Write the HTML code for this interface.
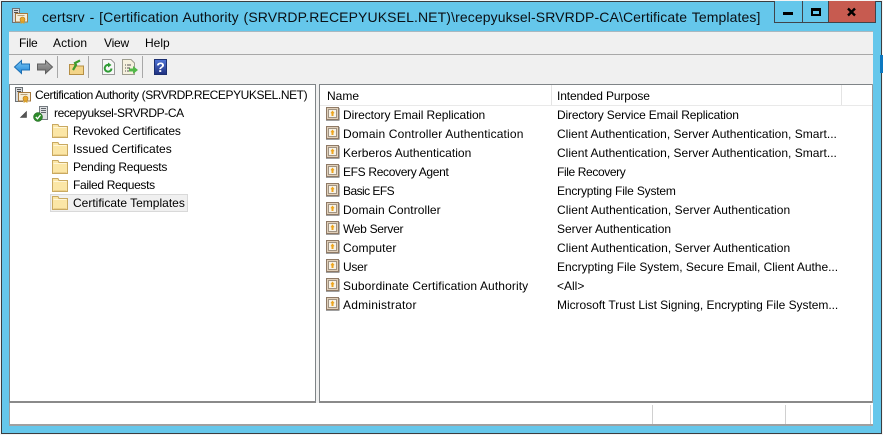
<!DOCTYPE html>
<html><head><meta charset="utf-8"><style>
html,body{margin:0;padding:0;width:883px;height:435px;overflow:hidden;background:#f4f4f4;font-family:"Liberation Sans",sans-serif;font-size:12px;color:#000}
div,span,svg{position:absolute;box-sizing:border-box}
.t{white-space:nowrap;line-height:16px;height:16px}
svg{overflow:visible}
</style></head><body>
<svg width="0" height="0" style="left:0;top:0"><defs>
<linearGradient id="bl" x1="0" y1="0" x2="0" y2="1"><stop offset="0" stop-color="#7cc8f4"/><stop offset="1" stop-color="#1f86d8"/></linearGradient>
<linearGradient id="gr" x1="0" y1="0" x2="0" y2="1"><stop offset="0" stop-color="#a8a8a8"/><stop offset="1" stop-color="#6c6c6c"/></linearGradient>
<linearGradient id="hp" x1="0" y1="0" x2="0" y2="1"><stop offset="0" stop-color="#4f74d6"/><stop offset="1" stop-color="#1f3180"/></linearGradient>
<symbol id="ca" viewBox="0 0 16 16"><rect x="0.500" y="0.500" width="7" height="14" fill="#d8dadc" stroke="#6d7276"/><rect x="2" y="2" width="4" height="1" fill="#555"/><rect x="2" y="4" width="4" height="1" fill="#555"/><rect x="3.500" y="5.500" width="12" height="8.500" fill="#f6efdc" stroke="#a5793f"/><rect x="5.500" y="7" width="7" height="1" fill="#b9a27a"/><circle cx="10.500" cy="11.500" r="2.500" fill="#e9a92c" stroke="#b5791c" stroke-width=".6"/><path d="M9 13l-.5 3 2-1 2 1-.5-3" fill="#d8a02a"/></symbol>
<symbol id="srv" viewBox="0 0 16 16"><rect x="6.500" y="0.500" width="8" height="13" fill="#dfe1e3" stroke="#747a80"/><rect x="8" y="2" width="5" height="1" fill="#60666c"/><rect x="8" y="4" width="5" height="1" fill="#60666c"/><rect x="8" y="6" width="5" height="1" fill="#60666c"/><circle cx="5" cy="11" r="4.500" fill="#2d8a2a" stroke="#1a5c1a" stroke-width=".5"/><path d="M2.800 11l1.700 1.800 3-3.800" fill="none" stroke="#fff" stroke-width="1.300"/></symbol>
<symbol id="fold" viewBox="0 0 16 16"><path d="M0.500 14.500V1.500h5.500l1 2h8.500v11z" fill="#fbe6a6" stroke="#c9a961"/><path d="M1.500 4.500h13" stroke="#fff6d8" fill="none"/><path d="M1.500 13.500h13" stroke="#ecd08a" fill="none"/></symbol>
<symbol id="cert" viewBox="0 0 16 16"><rect x="1.500" y="1.500" width="12" height="12" fill="#e0cfb9" stroke="#8f7a66"/><rect x="3.500" y="3.500" width="8" height="8" fill="#f8f3e8" stroke="#a09383"/><path d="M7.500 4.500l2 2.500-1 .5v2.500h-2V7.500l-1-.5z" fill="#eda51f"/><path d="M1 14.500h13.500" stroke="#a0a0a0" fill="none"/><path d="M14.500 2v12" stroke="#b4b4b4" fill="none"/></symbol>
</defs></svg>

<div style="left:1px;top:1px;width:881px;height:433px;background:#65c7eb;border:1px solid #3a3d40"></div>
<div style="left:880px;top:55px;width:3px;height:18px;background:#0c78c0"></div>

<svg style="left:12px;top:8px" width="16" height="16"><use href="#ca"/></svg>
<div class="t" style="left:42px;top:8px;font-size:14px;letter-spacing:.11px;word-spacing:.8px;height:18px;line-height:18px;color:#0a0f14">certsrv - [Certification Authority (SRVRDP.RECEPYUKSEL.NET)\recepyuksel-SRVRDP-CA\Certificate Templates]</div>

<div style="left:774px;top:1px;width:102px;height:22px;border:1px solid #40444a;border-top:0;background:#65c7eb"></div>
<div style="left:802px;top:1px;width:1px;height:22px;background:#40444a"></div>
<div style="left:828px;top:1px;width:1px;height:22px;background:#40444a"></div>
<div style="left:829px;top:1px;width:46px;height:21px;background:#c75b50"></div>
<div style="left:783px;top:12px;width:10px;height:3px;background:#000"></div>
<div style="left:811px;top:8px;width:10px;height:8px;border:2px solid #000;border-top-width:3px"></div>
<svg style="left:847px;top:8px" width="9" height="8"><path d="M1 0.500L8 7.500M8 0.500L1 7.500" stroke="#000" stroke-width="2.400"/></svg>

<div style="left:9px;top:31px;width:864px;height:53px;background:#f0f0f0;border-top:1px solid #a9b8c0"></div>
<div style="left:9px;top:84px;width:864px;height:320px;background:#f0f0f0"></div>
<div style="left:9px;top:54px;width:864px;height:1px;background:#a8a8a8"></div>
<div class="t" style="left:19px;top:35px;letter-spacing:-.2px">File</div>
<div class="t" style="left:53px;top:35px;letter-spacing:.15px">Action</div>
<div class="t" style="left:104px;top:35px;letter-spacing:-.2px">View</div>
<div class="t" style="left:145px;top:35px">Help</div>

<svg style="left:14px;top:60px" width="16" height="14"><path d="M0.500 7L7.500 0.500V4H15.500V10H7.500V13.500Z" fill="url(#bl)" stroke="#1c6fb4"/></svg>
<svg style="left:37px;top:60px" width="16" height="14"><path d="M15.500 7L8.500 0.500V4H0.500V10H8.500V13.500Z" fill="url(#gr)" stroke="#5f5f5f"/></svg>
<div style="left:57px;top:56px;width:1px;height:22px;background:#a8a8a8"></div>
<svg style="left:69px;top:59px" width="15" height="16"><path d="M0.500 15.500V5.500H5l1 1.500h8.500v8.500z" fill="#f3d488" stroke="#b58f45"/><path d="M4 11L7 6 6 4 11 1.500" fill="none" stroke="#3d9c2c" stroke-width="2.200"/></svg>
<div style="left:88px;top:56px;width:1px;height:22px;background:#a8a8a8"></div>
<svg style="left:101px;top:59px" width="15" height="16"><path d="M1.500 0.500H10L13.500 4V15.500H1.500Z" fill="#f7f7f7" stroke="#9a9a9a"/><path d="M10.500 9.500A3.400 3.400 0 1 1 8 6" fill="none" stroke="#2f9c35" stroke-width="2"/><path d="M7 3.500L10.500 6 7 8.500Z" fill="#2f9c35"/></svg>
<svg style="left:122px;top:59px" width="16" height="16"><path d="M0.500 0.500H9L12.500 4V15.500H0.500Z" fill="#f6f1de" stroke="#9d9d8f"/><path d="M3 6h1M5 6h4M3 9h1M5 9h3M3 12h1M5 12h3" stroke="#555" fill="none"/><path d="M7 9.500h4V7l5 4-5 4v-2.500H7z" fill="#52b848"/></svg>
<div style="left:142px;top:56px;width:1px;height:22px;background:#a8a8a8"></div>
<svg style="left:154px;top:59px" width="13" height="16"><rect x=".5" y=".5" width="12" height="15" fill="url(#hp)" stroke="#1c2f70"/></svg>
<div class="t" style="left:154px;top:59px;width:13px;text-align:center;color:#fff;font-weight:bold;font-size:14px">?</div>

<div style="left:9px;top:84px;width:307px;height:319px;background:#fff;border:1px solid #7f8487;border-bottom:2px solid #8a8a8a"></div>
<div style="left:319px;top:84px;width:554px;height:319px;background:#fff;border:1px solid #7f8487;border-bottom:2px solid #8a8a8a;border-right:0"></div>
<div style="left:872px;top:84px;width:1px;height:342px;background:#9a9a9a"></div>
<div style="left:9px;top:403px;width:864px;height:23px;background:#fff;border-left:1px solid #a0a0a0;border-bottom:2px solid #a0a0a0"></div>
<div style="left:652px;top:405px;width:1px;height:19px;background:#d0d0d0"></div>
<div style="left:785px;top:405px;width:1px;height:19px;background:#d0d0d0"></div>
<div style="left:870px;top:405px;width:1px;height:19px;background:#d0d0d0"></div>

<svg style="left:15px;top:87px" width="16" height="16"><use href="#ca"/></svg>
<div class="t" style="left:35px;top:87px;letter-spacing:-.42px">Certification Authority (SRVRDP.RECEPYUKSEL.NET)</div>
<svg style="left:20px;top:111px" width="7" height="7"><path d="M6.500 0.500V6.500H0.500Z" fill="#555" stroke="#444" stroke-width=".6"/></svg>
<svg style="left:33px;top:106px" width="16" height="16"><use href="#srv"/></svg>
<div class="t" style="left:54px;top:105px;letter-spacing:-.42px">recepyuksel-SRVRDP-CA</div>

<div style="left:50px;top:194px;width:138px;height:18px;background:#f0f0f0;border:1px solid #d9d9d9"></div>
<svg style="left:52px;top:123px" width="16" height="16"><use href="#fold"/></svg>
<svg style="left:52px;top:141px" width="16" height="16"><use href="#fold"/></svg>
<svg style="left:52px;top:159px" width="16" height="16"><use href="#fold"/></svg>
<svg style="left:52px;top:177px" width="16" height="16"><use href="#fold"/></svg>
<svg style="left:52px;top:195px" width="16" height="16"><use href="#fold"/></svg>
<div class="t" style="left:73px;top:123px;letter-spacing:-.15px">Revoked Certificates</div>
<div class="t" style="left:73px;top:141px">Issued Certificates</div>
<div class="t" style="left:73px;top:159px;letter-spacing:-.25px">Pending Requests</div>
<div class="t" style="left:73px;top:177px;letter-spacing:-.33px">Failed Requests</div>
<div class="t" style="left:73px;top:195px">Certificate Templates</div>

<div style="left:320px;top:85px;width:522px;height:20px;border-right:1px solid #e4e4e4"></div>
<div style="left:320px;top:105px;width:552px;height:1px;background:#e9e9e9"></div>
<div style="left:551px;top:85px;width:1px;height:20px;background:#e4e4e4"></div>
<div class="t" style="left:327px;top:88px">Name</div>
<div class="t" style="left:557px;top:88px;letter-spacing:-.12px">Intended Purpose</div>

<svg style="left:325px;top:106px" width="16" height="16"><use href="#cert"/></svg>
<div class="t" style="left:343px;top:107px;letter-spacing:-.07px">Directory Email Replication</div>
<div class="t" style="left:557px;top:107px;letter-spacing:-.16px">Directory Service Email Replication</div>
<svg style="left:325px;top:125px" width="16" height="16"><use href="#cert"/></svg>
<div class="t" style="left:343px;top:126px;letter-spacing:.16px">Domain Controller Authentication</div>
<div class="t" style="left:557px;top:126px;letter-spacing:.02px">Client Authentication, Server Authentication, Smart...</div>
<svg style="left:325px;top:144px" width="16" height="16"><use href="#cert"/></svg>
<div class="t" style="left:343px;top:145px;letter-spacing:.04px">Kerberos Authentication</div>
<div class="t" style="left:557px;top:145px;letter-spacing:.02px">Client Authentication, Server Authentication, Smart...</div>
<svg style="left:325px;top:163px" width="16" height="16"><use href="#cert"/></svg>
<div class="t" style="left:343px;top:164px;letter-spacing:-.33px">EFS Recovery Agent</div>
<div class="t" style="left:557px;top:164px;letter-spacing:-.38px">File Recovery</div>
<svg style="left:325px;top:182px" width="16" height="16"><use href="#cert"/></svg>
<div class="t" style="left:343px;top:183px;letter-spacing:-.55px">Basic EFS</div>
<div class="t" style="left:557px;top:183px;letter-spacing:-.18px">Encrypting File System</div>
<svg style="left:325px;top:201px" width="16" height="16"><use href="#cert"/></svg>
<div class="t" style="left:343px;top:202px;letter-spacing:.06px">Domain Controller</div>
<div class="t" style="left:557px;top:202px;letter-spacing:.07px">Client Authentication, Server Authentication</div>
<svg style="left:325px;top:220px" width="16" height="16"><use href="#cert"/></svg>
<div class="t" style="left:343px;top:221px;letter-spacing:-.3px">Web Server</div>
<div class="t" style="left:557px;top:221px">Server Authentication</div>
<svg style="left:325px;top:239px" width="16" height="16"><use href="#cert"/></svg>
<div class="t" style="left:343px;top:240px;letter-spacing:.1px">Computer</div>
<div class="t" style="left:557px;top:240px;letter-spacing:.07px">Client Authentication, Server Authentication</div>
<svg style="left:325px;top:258px" width="16" height="16"><use href="#cert"/></svg>
<div class="t" style="left:343px;top:259px;letter-spacing:-.25px">User</div>
<div class="t" style="left:557px;top:259px;letter-spacing:-.02px">Encrypting File System, Secure Email, Client Authe...</div>
<svg style="left:325px;top:277px" width="16" height="16"><use href="#cert"/></svg>
<div class="t" style="left:343px;top:278px;letter-spacing:.11px">Subordinate Certification Authority</div>
<div class="t" style="left:557px;top:278px">&lt;All&gt;</div>
<svg style="left:325px;top:296px" width="16" height="16"><use href="#cert"/></svg>
<div class="t" style="left:343px;top:297px;letter-spacing:.23px">Administrator</div>
<div class="t" style="left:557px;top:297px;letter-spacing:-.04px">Microsoft Trust List Signing, Encrypting File System...</div>
</body></html>
